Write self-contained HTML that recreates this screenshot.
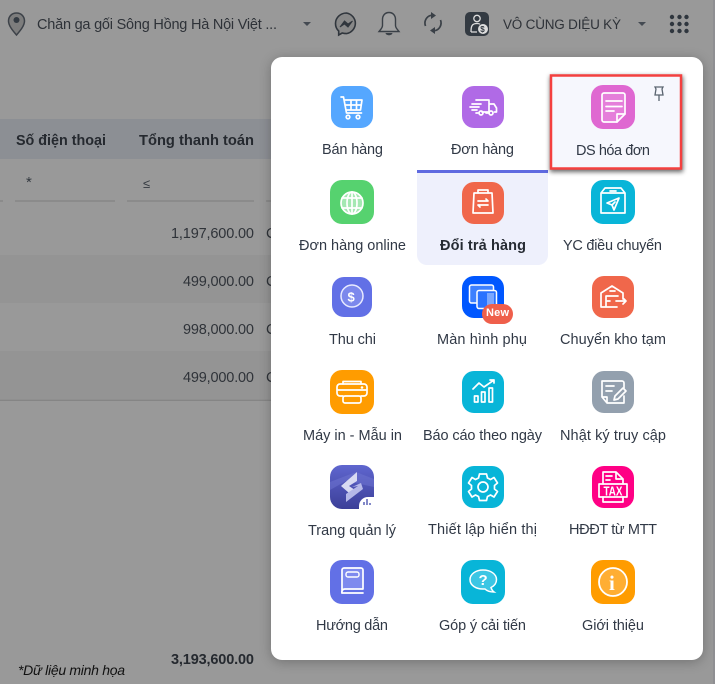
<!DOCTYPE html>
<html lang="vi"><head><meta charset="utf-8"><title>Menu</title>
<style>
html,body{margin:0;padding:0;background:#999;width:715px;height:684px;overflow:hidden}
svg{display:block}
text{font-family:"Liberation Sans","Noto Sans CJK JP",sans-serif;font-size:14.5px;fill:#313946}
.w{fill:none;stroke:#fff;stroke-width:1.7;stroke-linecap:round;stroke-linejoin:round}
.h{font-size:14.5px;fill:#2e3238}
.d{fill:#2f363e}
</style></head><body>
<svg width="715" height="684" viewBox="0 0 715 684" xmlns="http://www.w3.org/2000/svg">
<defs>
<filter id="s" x="-20%" y="-20%" width="140%" height="140%"><feGaussianBlur stdDeviation="6"/></filter>
<filter id="s2" x="-20%" y="-20%" width="140%" height="140%"><feGaussianBlur stdDeviation="2.5"/></filter>
<linearGradient id="g" x1="0" y1="0" x2="0" y2="1"><stop offset="0" stop-color="#5f66cf"/><stop offset="1" stop-color="#3c3f98"/></linearGradient>
</defs>
<rect width="715" height="684" fill="#999"/>
<rect x="713" y="0" width="2" height="684" fill="#8f8f92"/>

<!-- table -->
<rect x="0" y="119" width="271" height="40" fill="#8c8f94"/>
<rect x="0" y="255" width="271" height="48" fill="#949494"/>
<rect x="0" y="351" width="271" height="48" fill="#949494"/>
<rect x="0" y="399.500" width="271" height="1.500" fill="#858585"/>
<rect x="15" y="200.500" width="100" height="1" fill="#7d7d7d"/>
<rect x="127" y="200.500" width="127" height="1" fill="#7d7d7d"/>
<rect x="0" y="200.500" width="3" height="1" fill="#7d7d7d"/>
<rect x="266" y="200.500" width="5" height="1" fill="#7d7d7d"/>
<text x="16" y="145" textLength="90" lengthAdjust="spacingAndGlyphs" style="font-weight:700;fill:#25292f">Số điện thoại</text>
<text x="139" y="145" textLength="115" lengthAdjust="spacingAndGlyphs" style="font-weight:700;fill:#25292f">Tổng thanh toán</text>
<text x="26" y="187" style="fill:#333940;font-size:15px">*</text>
<text x="143" y="188" style="fill:#333940;font-size:13px">≤</text>
<text x="171" y="238" textLength="83" style="fill:#2f3339">1,197,600.00</text>
<text x="183" y="286" textLength="71" style="fill:#2f3339">499,000.00</text>
<text x="183" y="334" textLength="71" style="fill:#2f3339">998,000.00</text>
<text x="183" y="382" textLength="71" style="fill:#2f3339">499,000.00</text>
<text x="266" y="238" style="fill:#2f3339">C</text><text x="266" y="286" style="fill:#2f3339">C</text>
<text x="266" y="334" style="fill:#2f3339">C</text><text x="266" y="382" style="fill:#2f3339">C</text>
<text x="171" y="664" textLength="83" style="font-weight:700;fill:#25292f">3,193,600.00</text>
<text x="18" y="675" textLength="107" style="font-style:italic;fill:#111;font-size:14px">*Dữ liệu minh họa</text>

<!-- header -->
<path d="M16.500 13c-4.700 0-8 3.500-8 8 0 5 5 10.500 8 14 3-3.500 8-9 8-14 0-4.500-3.300-8-8-8z" fill="#7d7d7d" stroke="#3d4249" stroke-width="1.500"/>
<circle cx="16.500" cy="20" r="3" fill="#333a42"/>
<text x="37" y="29" textLength="240" class="h">Chăn ga gối Sông Hồng Hà Nội Việt ...</text>
<path d="M303 22h8l-4 4z" fill="#444a52"/>
<path d="M346.500 13a11 10.500 0 0 0-11 10.500c0 3 1 5.500 3.200 7.500v4l3.500-2c1.300.4 2.800.6 4.300.6a11 10.500 0 0 0 0-20.600z" fill="#888" stroke="#30363d" stroke-width="1.600"/>
<path d="M340 27l4.500-6 3.500 3 4.500-3-4.500 6-3.500-3z" fill="#30363d" stroke="#30363d"/>
<path d="M389 12.500c-4 0-6.500 3-6.500 7v6c0 2.500-2 4-3.500 6h20c-1.500-2-3.500-3.500-3.500-6v-6c0-4-2.500-7-6.500-7z" fill="#a2a2a2" stroke="#3a4047" stroke-width="1.400"/>
<path d="M385.500 33c.5 3 6.500 3 7 0z" fill="#3a4047"/>
<path d="M425.500 26A8 8 0 0 1 431 15.300M440.500 20A8 8 0 0 1 435 30.700" fill="none" stroke="#3a4047" stroke-width="1.700"/>
<path d="M431 12l5 3.500-5 3.500zM435 27l-5 3.500 5 3.500z" fill="#3a4047"/>
<rect x="465" y="12" width="24" height="24" rx="5" fill="#333a42"/>
<circle cx="477" cy="18.500" r="3.200" fill="none" stroke="#ddd" stroke-width="1.300"/>
<path d="M471 32c0-6 1-8.500 6-8.500 1.500 0 2.500.3 3 .7M471 32h6" fill="none" stroke="#ddd" stroke-width="1.300"/>
<circle cx="483" cy="29" r="5" fill="#ddd"/>
<text x="480.300" y="32" style="font-size:8px;font-weight:700;fill:#333a42">$</text>
<text x="503" y="29" textLength="118" style="font-size:13.500px;fill:#2e3238">VÔ CÙNG DIỆU KỲ</text>
<path d="M638 22h8l-4 4z" fill="#444a52"/>
<g class="d"><circle cx="672" cy="17" r="2.200"/><circle cx="679.500" cy="17" r="2.200"/><circle cx="686.500" cy="17" r="2.200"/><circle cx="672" cy="24" r="2.200"/><circle cx="679.500" cy="24" r="2.200"/><circle cx="686.500" cy="24" r="2.200"/><circle cx="672" cy="31" r="2.200"/><circle cx="679.500" cy="31" r="2.200"/><circle cx="686.500" cy="31" r="2.200"/></g>

<!-- popup -->
<rect x="271" y="59" width="432" height="603" rx="11" fill="#000" opacity=".25" filter="url(#s)"/>
<rect x="271" y="57" width="432" height="603" rx="11" fill="#fff"/>

<!-- selected -->
<path d="M417 170h131v85a10 10 0 0 1-10 10h-111a10 10 0 0 1-10-10z" fill="#eef0fc"/>
<rect x="417" y="170" width="131" height="3" fill="#5f6ae0"/>

<!-- highlighted -->
<rect x="550" y="76" width="133" height="96" fill="#000" opacity=".6" filter="url(#s2)"/>
<rect x="551" y="75.500" width="130" height="93" fill="#f6f7fd" stroke="#f4403f" stroke-width="2.500"/>
<path d="M655 87h8l-1 2 1 6h-8l1-6z" fill="none" stroke="#5a6470" stroke-width="1.300"/><path d="M659 95v6" stroke="#5a6470" stroke-width="1.300"/>

<!-- 1 cart -->
<rect x="331" y="86" width="42" height="42" rx="12" fill="#55a7ff"/>
<g class="w"><path d="M341 97h2.500l3 16h15"/><path d="M345 100h17l-1.500 10h-14M351 100v10M356.500 100v10M345.500 105h15.500"/><circle cx="348" cy="117" r="1.800"/><circle cx="358" cy="117" r="1.800"/></g>
<text x="322" y="154" textLength="61">Bán hàng</text>

<!-- 2 truck -->
<rect x="462" y="86" width="42" height="42" rx="12" fill="#b06ae6"/>
<g class="w"><path d="M476 100h13v12h-7M489 104h5l2.500 4v4h-2M472 104h9M470 107h9M472 110h5M476 113h2M486 113h3"/><circle cx="481" cy="113" r="2"/><circle cx="491" cy="113" r="2"/></g>
<text x="451" y="154" textLength="63">Đơn hàng</text>

<!-- 3 invoice -->
<rect x="591" y="85" width="44" height="44" rx="12" fill="#df68d1"/>
<g class="w"><path d="M604 93h19a2 2 0 0 1 2 2v19l-8 8h-13a2 2 0 0 1-2-2v-25a2 2 0 0 1 2-2z" style="fill:#e57fda"/><path d="M625 114h-8v8M606 101h16M606 106.500h16M606 111h8"/></g>
<text x="576" y="155" textLength="74">DS hóa đơn</text>

<!-- 4 globe -->
<rect x="330" y="180" width="44" height="44" rx="12" fill="#56d26f"/>
<circle cx="352" cy="203" r="11" fill="#a4e8b2"/>
<g class="w"><circle cx="352" cy="203" r="11"/><ellipse cx="352" cy="203" rx="5" ry="11"/><path d="M352 192v22M342 198h20M342 208h20"/></g>
<text x="299" y="250" textLength="107">Đơn hàng online</text>

<!-- 5 bag -->
<rect x="462" y="182" width="42" height="42" rx="12" fill="#f0674b"/>
<g class="w"><path d="M474 193h18l1 20h-20z"/><path d="M478 193v-3h10v3M478 201h10l-2-2M488 205h-10l2 2"/></g>
<text x="440" y="250" textLength="86" style="font-weight:700;fill:#262b33">Đổi trả hàng</text>

<!-- 6 box -->
<rect x="591" y="180" width="44" height="44" rx="12" fill="#08b5d8"/>
<g class="w"><path d="M601 193l4-5h16l4 5v20h-24zM601 193h24M610 191h6"/><path d="M619 198l-12 5 5 2 2 5zM612 205l3-3"/></g>
<text x="563" y="250" textLength="99">YC điều chuyển</text>

<!-- 7 dollar -->
<rect x="332" y="277" width="40" height="40" rx="12" fill="#6270e6"/>
<circle cx="352" cy="296" r="11" fill="#7c88ec" stroke="#e8eaff" stroke-width="1.500"/>
<text x="347.500" y="301.500" style="font-size:13px;font-weight:700;fill:#fff">$</text>
<text x="329" y="344" textLength="47">Thu chi</text>

<!-- 8 screens -->
<rect x="462" y="276" width="42" height="42" rx="12" fill="#0057ff"/>
<rect x="469.500" y="285" width="24" height="18" rx="2" fill="#3c80ff" stroke="#fff" stroke-width="1.500"/>
<rect x="477" y="290.500" width="19.500" height="18" rx="2" fill="#2a72ff" stroke="#fff" stroke-width="1.500"/>
<rect x="487" y="293" width="7" height="13" fill="#7ba8ff"/>
<rect x="482" y="304" width="31" height="20" rx="10" fill="#ef5f4b"/>
<text x="486" y="316" textLength="23" style="font-size:11px;font-weight:700;fill:#fff">New</text>
<text x="437" y="344" textLength="90">Màn hình phụ</text>

<!-- 9 warehouse -->
<rect x="592" y="276" width="42" height="42" rx="12" fill="#f0674b"/>
<g class="w"><path d="M601 307v-14l11-7 11 7v6M601 307h16M606 307v-11h12M610 291h5M606 301h4M616 301h10M623 298l3 3-3 3"/></g>
<text x="560" y="344" textLength="106">Chuyển kho tạm</text>

<!-- 10 printer -->
<rect x="330" y="370" width="44" height="44" rx="12" fill="#ff9c00"/>
<g class="w"><path d="M343 396h-3a3 3 0 0 1-3-3v-6a3 3 0 0 1 3-3h24a3 3 0 0 1 3 3v6a3 3 0 0 1-3 3h-3"/><path d="M338 390h28"/><path d="M343 384v-2.500h18v2.500"/><rect x="343" y="396" width="18" height="7" rx="2"/></g>
<circle cx="362" cy="387.500" r="1.300" fill="#fff"/>
<text x="303" y="440" textLength="99">Máy in - Mẫu in</text>

<!-- 11 report -->
<rect x="462" y="371" width="42" height="42" rx="12" fill="#08b5d8"/>
<g class="w"><path d="M473 389l6-6 5 4 10-7M490 380h4v3"/><rect x="474.500" y="396" width="3.500" height="6"/><rect x="481.500" y="392" width="3.500" height="10"/><rect x="489" y="388" width="3.500" height="14"/></g>
<text x="423" y="440" textLength="119">Báo cáo theo ngày</text>

<!-- 12 log -->
<rect x="592" y="371" width="42" height="42" rx="12" fill="#93a0ae"/>
<g class="w"><path d="M602 381h20a2 2 0 0 1 2 2v5M602 381v16l5 6h17v-7M607 403v-6h-5M606 386h8M606 391h6"/><path d="M615 396l8-8 3 3-8 8-4 1z"/></g>
<text x="560" y="440" textLength="106">Nhật ký truy cập</text>

<!-- 13 logo -->
<rect x="330" y="465" width="44" height="44" rx="12" fill="url(#g)"/>
<path d="M330 490l16-9 28 6v-8l-18-7-26 10z" fill="#7075d2" opacity=".5"/>
<path d="M357 472v9l-8 5 6 4-6 3-8-7z" fill="#d8daf2"/>
<path d="M361 483l2 6-17 13v-8l12-8-6 1z" fill="#b5b8e8"/>
<path d="M359 509v-3a9 9 0 0 1 9-9h6v4a8 8 0 0 1-8 8z" fill="#fff"/>
<path d="M364 505v-3M367 505v-6M370 505v-2" stroke="#5a62b5" stroke-width="1.500"/>
<text x="308" y="535" textLength="88">Trang quản lý</text>

<!-- 14 gear -->
<rect x="462" y="466" width="42" height="42" rx="12" fill="#08b5d8"/>
<path d="M479.500 474h7l1 4 3 1.500 3.500-2 3.500 5.500-3 2.500v3.500l3 2.500-3.500 5.500-3.500-2-3 1.500-1 4h-7l-1-4-3-1.500-3.500 2-3.500-5.500 3-2.500v-3.500l-3-2.500 3.500-5.500 3.500 2 3-1.500z" fill="none" stroke="#fff" stroke-width="1.700" stroke-linejoin="round"/>
<circle cx="483" cy="487" r="5" fill="none" stroke="#fff" stroke-width="1.700"/>
<text x="428" y="534" textLength="109">Thiết lập hiển thị</text>

<!-- 15 tax -->
<rect x="592" y="466" width="42" height="42" rx="12" fill="#ff0085"/>
<g class="w"><path d="M603 484v-12h13l7 7v5M616 472v7h7M606 476h6M606 480h4M603 497v5h20v-5"/><rect x="599" y="484" width="28" height="13"/></g>
<text x="603.500" y="495.500" textLength="19" lengthAdjust="spacingAndGlyphs" style="font-size:12.500px;font-weight:700;fill:#fff">TAX</text>
<text x="569" y="534" textLength="88">HĐĐT từ MTT</text>

<!-- 16 book -->
<rect x="330" y="560" width="44" height="44" rx="12" fill="#6270e6"/>
<g class="w"><path d="M342 593v-23a2 2 0 0 1 2-2h17a2 2 0 0 1 2 2v19h-18a3 3 0 0 0-3 4z" style="fill:#7e8aee"/><path d="M342 593h21"/></g>
<rect x="346" y="572" width="13" height="5" rx="2" fill="none" stroke="#fff" stroke-width="1.400"/>
<text x="316" y="630" textLength="72">Hướng dẫn</text>

<!-- 17 question -->
<rect x="461" y="560" width="44" height="44" rx="12" fill="#08b5d8"/>
<path d="M483 570c-7 0-13 4-13 9.500 0 6 6 9.500 13 9.500l2 0c2 2 5 3 9 3-1.500-1-2.500-3-3-4.500 3.500-1.700 5.500-4.500 5.500-8 0-5.500-6-9.500-13.500-9.500z" fill="#3cc6e4" stroke="#fff" stroke-width="1.500"/>
<text x="478.500" y="585" style="font-size:15px;font-weight:700;fill:#fff">?</text>
<text x="439" y="630" textLength="87">Góp ý cải tiến</text>

<!-- 18 info -->
<rect x="591" y="560" width="44" height="44" rx="12" fill="#ff9c00"/>
<circle cx="613" cy="582" r="14" fill="#ffae33" stroke="#fff" stroke-width="1.800"/>
<text x="609" y="590" style="font-family:'Liberation Serif',serif;font-size:21px;font-weight:700;fill:#fff">i</text>
<text x="582" y="630" textLength="62">Giới thiệu</text>
</svg>
</body></html>
